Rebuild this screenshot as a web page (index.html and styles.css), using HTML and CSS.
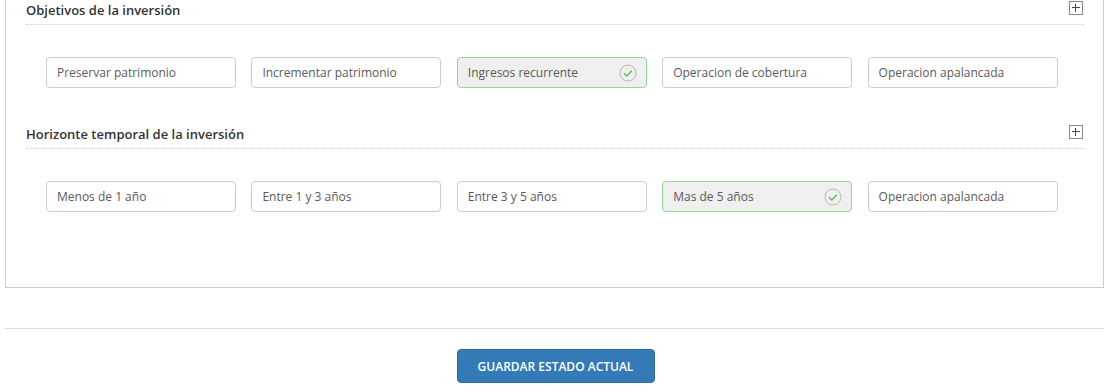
FILE: index.html
```html
<!DOCTYPE html>
<html lang="es">
<head>
    <meta charset="UTF-8">
    <title>Perfil inversor</title>
    <link rel="stylesheet" href="styles.css">
</head>
<body>
    <div class="panel">
        <div class="section">
            <div class="section-head">
                <h3>Objetivos de la inversión</h3>
                <span class="toggle"></span>
            </div>
            <div class="options">
                <button class="option">Preservar patrimonio</button>
                <button class="option">Incrementar patrimonio</button>
                <button class="option selected">Ingresos recurrente
                    <svg class="check" viewBox="0 0 18 18" width="18" height="18"><circle cx="9" cy="9" r="8" fill="none" stroke="#b9b9b9" stroke-width="1"/><path d="M5 9.2l2.8 2.8 5-5.2" fill="none" stroke="#5cb85c" stroke-width="1.3"/></svg>
                </button>
                <button class="option">Operacion de cobertura</button>
                <button class="option">Operacion apalancada</button>
            </div>
        </div>
        <div class="section">
            <div class="section-head">
                <h3>Horizonte temporal de la inversión</h3>
                <span class="toggle"></span>
            </div>
            <div class="options">
                <button class="option">Menos de 1 año</button>
                <button class="option">Entre 1 y 3 años</button>
                <button class="option">Entre 3 y 5 años</button>
                <button class="option selected">Mas de 5 años
                    <svg class="check" viewBox="0 0 18 18" width="18" height="18"><circle cx="9" cy="9" r="8" fill="none" stroke="#b9b9b9" stroke-width="1"/><path d="M5 9.2l2.8 2.8 5-5.2" fill="none" stroke="#5cb85c" stroke-width="1.3"/></svg>
                </button>
                <button class="option">Operacion apalancada</button>
            </div>
        </div>
    </div>

    <div class="footer">
        <button class="btn-save">GUARDAR ESTADO ACTUAL</button>
    </div>
</body>
</html>
```

FILE: styles.css
```css
* {
    margin: 0;
    padding: 0;
    box-sizing: border-box;
}

body {
    font-family: 'Open Sans', 'Liberation Sans', sans-serif;
    background: #fff;
    color: #333;
}

/* Panel */
.panel {
    margin: 0 5px 0 5px;
    border: 1px solid #ccc;
    border-top: none;
    padding: 0 19px 75px 20px;
}

.section + .section {
    margin-top: 36px;
}

.section-head {
    display: flex;
    justify-content: space-between;
    align-items: center;
    height: 25px;
    padding-bottom: 4px;
    border-bottom: 1px dotted #ccc;
}

.section-head h3 {
    font-size: 13px;
    font-weight: 600;
    color: #333;
    line-height: 20px;
}

.toggle {
    position: relative;
    width: 14px;
    height: 14px;
    border: 1px solid #888;
    margin-right: 1px;
    align-self: flex-start;
    margin-top: 1px;
}

.toggle::before,
.toggle::after {
    content: '';
    position: absolute;
    background: #5a3a6a;
}

.toggle::before {
    left: 2px;
    right: 2px;
    top: 5px;
    height: 1px;
}

.toggle::after {
    top: 2px;
    bottom: 2px;
    left: 5px;
    width: 1px;
}

/* Options */
.options {
    display: flex;
    gap: 15.4px;
    padding: 32px 20px 0 20px;
}

.option {
    display: flex;
    align-items: center;
    justify-content: space-between;
    width: 190px;
    height: 31px;
    padding: 0 9px 0 10px;
    background: #fff;
    border: 1px solid #ccc;
    border-radius: 4px;
    font-family: inherit;
    font-size: 12px;
    color: #5a5a5a;
    text-align: left;
    cursor: pointer;
}

.option.selected {
    background: #efefef;
    border-color: #8dd995;
}

.check {
    display: block;
}

/* Footer */
.footer {
    margin-top: 40px;
    border-top: 1px solid #ddd;
    margin-left: 5px;
    margin-right: 5px;
    padding-top: 20px;
    display: flex;
    justify-content: center;
}

.btn-save {
    width: 198px;
    height: 34px;
    margin-left: 2px;
    background: #337ab7;
    border: 1px solid #2e6da4;
    border-radius: 4px;
    color: #fff;
    font-family: inherit;
    font-size: 12px;
    font-weight: 600;
    cursor: pointer;
}
```
